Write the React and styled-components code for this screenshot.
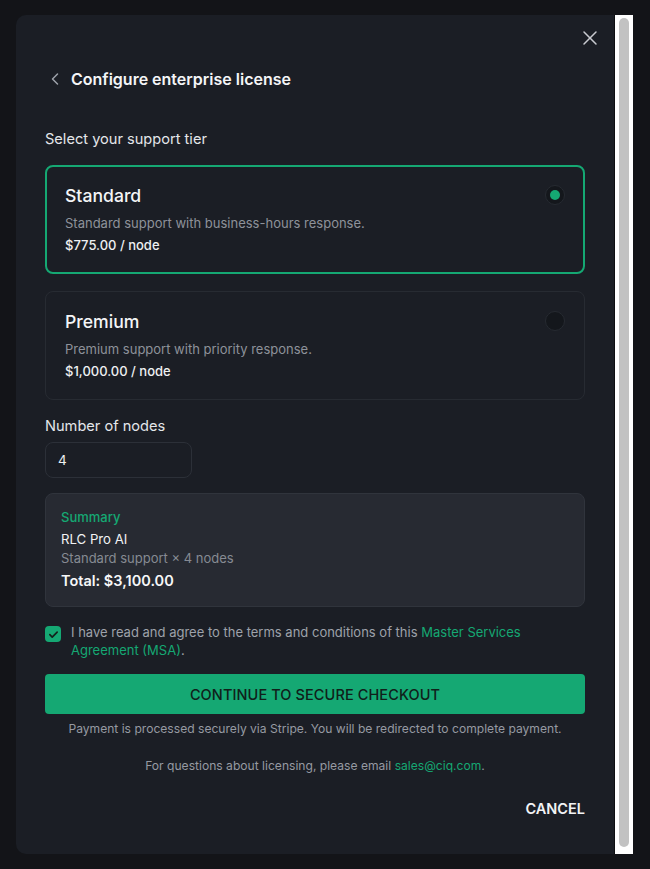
import React from "react";
import styled, { createGlobalStyle } from "styled-components";
import { X, ChevronLeft } from "lucide-react";

const GREEN = "#15a873";

const GlobalStyle = createGlobalStyle`
  html, body {
    margin: 0;
    padding: 0;
    background: #131418;
    font-family: Inter, "Noto Sans", "Liberation Sans", sans-serif;
    -webkit-font-smoothing: antialiased;
  }
  * {
    box-sizing: border-box;
  }
`;

const Overlay = styled.div`
  height: 100vh;
  padding: 15px 17px 15px 16px;
  display: flex;
`;

const Dialog = styled.div`
  flex: 1;
  display: flex;
  background: #1b1e25;
  border-radius: 10px 0 0 10px;
  overflow: hidden;
`;

const Content = styled.div`
  flex: 1;
  min-width: 0;
  overflow: hidden;
  padding: 11px 29px 40px;
  display: flex;
  flex-direction: column;

  & > * {
    flex-shrink: 0;
  }
`;

/* the dialog's classic scrollbar */
const ScrollTrack = styled.div`
  width: 19px;
  flex: none;
  background: #fff;
  border-left: 1px solid #0d0e11;
  padding: 3px 4px 7px 4px;
  display: flex;
`;

const ScrollThumb = styled.div`
  flex: 1;
  border-radius: 6px;
  background: #c2c2c2;
`;

const CloseRow = styled.div`
  display: flex;
  justify-content: flex-end;
  margin-right: -17px;
  height: 24px;
`;

const IconButton = styled.button`
  width: 24px;
  height: 24px;
  padding: 0;
  border: none;
  background: none;
  color: #c8cad0;
  display: flex;
  align-items: center;
  justify-content: center;
  cursor: pointer;
`;

const TitleRow = styled.div`
  display: flex;
  align-items: center;
  gap: 6px;
  margin-top: 17px;
  height: 24px;
`;

const BackIcon = styled.span`
  display: flex;
  color: #9ea2aa;
`;

const Title = styled.h2`
  margin: 0;
  font-size: 16px;
  font-weight: 600;
  color: #f4f5f7;
`;

const Label = styled.div`
  font-size: 14.6px;
  line-height: 20px;
  color: #e4e6ea;
  margin-top: ${(p) => p.$mt}px;
`;

const Card = styled.div`
  display: flex;
  align-items: flex-start;
  margin-top: ${(p) => p.$mt}px;
  border-radius: 8px;
  border: ${(p) => (p.$selected ? `2px solid ${GREEN}` : "1px solid #272b32")};
  padding: ${(p) => (p.$selected ? "16px 18px 17px" : "17px 19px 18px")};
  cursor: pointer;
`;

const CardBody = styled.div`
  flex: 1;
  display: flex;
  flex-direction: column;
`;

const CardTitle = styled.div`
  font-size: 17.6px;
  line-height: 26px;
  color: #f4f5f7;
  font-weight: 500;
`;

const CardDesc = styled.div`
  margin-top: 4px;
  font-size: 13px;
  line-height: 20px;
  color: #8e929a;
`;

const CardPrice = styled.div`
  margin-top: 2px;
  font-size: 13px;
  line-height: 20px;
  color: #eef0f2;
  font-weight: 500;
`;

const Radio = styled.span`
  width: 20px;
  height: 20px;
  margin-top: 2px;
  border-radius: 50%;
  background: #14171c;
  border: 1px solid #262a31;
  display: flex;
  align-items: center;
  justify-content: center;

  &::after {
    content: "";
    width: 10px;
    height: 10px;
    border-radius: 50%;
    background: ${(p) => (p.$on ? GREEN : "transparent")};
  }
`;

const Input = styled.input`
  margin-top: 6px;
  width: 147px;
  height: 36px;
  border-radius: 8px;
  border: 1px solid #2c3038;
  background: #1b1e25;
  color: #eef0f2;
  font-family: inherit;
  font-size: 13.5px;
  padding: 0 12px;
  outline: none;
`;

const Summary = styled.div`
  margin-top: 15px;
  background: #272a32;
  border: 1px solid #30343c;
  border-radius: 8px;
  padding: 14px 15px;
  display: flex;
  flex-direction: column;
`;

const SummaryHead = styled.div`
  font-size: 13px;
  line-height: 18px;
  color: ${GREEN};
  font-weight: 500;
`;

const SummaryProduct = styled.div`
  margin-top: 3px;
  font-size: 13.2px;
  line-height: 20px;
  color: #f1f2f4;
`;

const SummaryDetail = styled.div`
  font-size: 13px;
  line-height: 18px;
  color: #868a92;
`;

const SummaryTotal = styled.div`
  margin-top: 3px;
  font-size: 14.5px;
  line-height: 22px;
  font-weight: 600;
  color: #f6f7f8;
`;

const AgreeRow = styled.label`
  margin-top: 16px;
  display: flex;
  align-items: flex-start;
  gap: 10px;
  cursor: pointer;
`;

const Check = styled.span`
  flex: none;
  width: 16px;
  height: 16px;
  margin-top: 3px;
  border-radius: 4px;
  background: ${GREEN};
  display: flex;
  align-items: center;
  justify-content: center;
`;

const AgreeText = styled.span`
  font-size: 13px;
  line-height: 18px;
  color: #9ea2aa;
`;

const Link = styled.a`
  color: ${GREEN};
  text-decoration: none;
`;

const PrimaryButton = styled.button`
  margin-top: 15px;
  height: 40px;
  width: 100%;
  border: none;
  border-radius: 4px;
  background: ${GREEN};
  color: #10201a;
  font-family: inherit;
  font-size: 14.5px;
  font-weight: 500;
  letter-spacing: 0.1px;
  cursor: pointer;
`;

const Note = styled.p`
  margin: ${(p) => p.$mt}px 0 0;
  text-align: center;
  font-size: 12.1px;
  line-height: 18px;
  color: #969aa2;
`;

const Footer = styled.div`
  margin-top: 23px;
  display: flex;
  justify-content: flex-end;
`;

const TextButton = styled.button`
  border: none;
  background: none;
  padding: 0;
  height: 20px;
  font-family: inherit;
  font-size: 14.5px;
  font-weight: 600;
  color: #f2f3f5;
  cursor: pointer;
`;

const tiers = [
  {
    id: "standard",
    name: "Standard",
    desc: "Standard support with business-hours response.",
    price: "$775.00 / node",
  },
  {
    id: "premium",
    name: "Premium",
    desc: "Premium support with priority response.",
    price: "$1,000.00 / node",
  },
];

export default function App() {
  const selected = "standard";
  return (
    <>
      <GlobalStyle />
      <Overlay>
        <Dialog>
          <Content>
            <CloseRow>
              <IconButton aria-label="Close">
                <X size={24} strokeWidth={1.5} />
              </IconButton>
            </CloseRow>
            <TitleRow>
              <BackIcon>
                <ChevronLeft size={20} strokeWidth={1.8} />
              </BackIcon>
              <Title>Configure enterprise license</Title>
            </TitleRow>

            <Label $mt={38}>Select your support tier</Label>
            {tiers.map((t, i) => (
              <Card key={t.id} $selected={t.id === selected} $mt={i === 0 ? 16 : 17}>
                <CardBody>
                  <CardTitle>{t.name}</CardTitle>
                  <CardDesc>{t.desc}</CardDesc>
                  <CardPrice>{t.price}</CardPrice>
                </CardBody>
                <Radio $on={t.id === selected} />
              </Card>
            ))}

            <Label $mt={16}>Number of nodes</Label>
            <Input defaultValue="4" />

            <Summary>
              <SummaryHead>Summary</SummaryHead>
              <SummaryProduct>RLC Pro AI</SummaryProduct>
              <SummaryDetail>Standard support × 4 nodes</SummaryDetail>
              <SummaryTotal>Total: $3,100.00</SummaryTotal>
            </Summary>

            <AgreeRow>
              <Check>
                <svg width="11" height="11" viewBox="0 0 12 12" fill="none">
                  <path
                    d="M2 6.2l2.6 2.6L10 3.4"
                    stroke="#14201b"
                    strokeWidth="1.8"
                    strokeLinecap="round"
                    strokeLinejoin="round"
                  />
                </svg>
              </Check>
              <AgreeText>
                I have read and agree to the terms and conditions of this{" "}
                <Link href="#">Master Services Agreement (MSA)</Link>.
              </AgreeText>
            </AgreeRow>

            <PrimaryButton>CONTINUE TO SECURE CHECKOUT</PrimaryButton>
            <Note $mt={6}>
              Payment is processed securely via Stripe. You will be redirected to complete payment.
            </Note>
            <Note $mt={19}>
              For questions about licensing, please email <Link href="#">sales@ciq.com</Link>.
            </Note>

            <Footer>
              <TextButton>CANCEL</TextButton>
            </Footer>
          </Content>
          <ScrollTrack>
            <ScrollThumb />
          </ScrollTrack>
        </Dialog>
      </Overlay>
    </>
  );
}
